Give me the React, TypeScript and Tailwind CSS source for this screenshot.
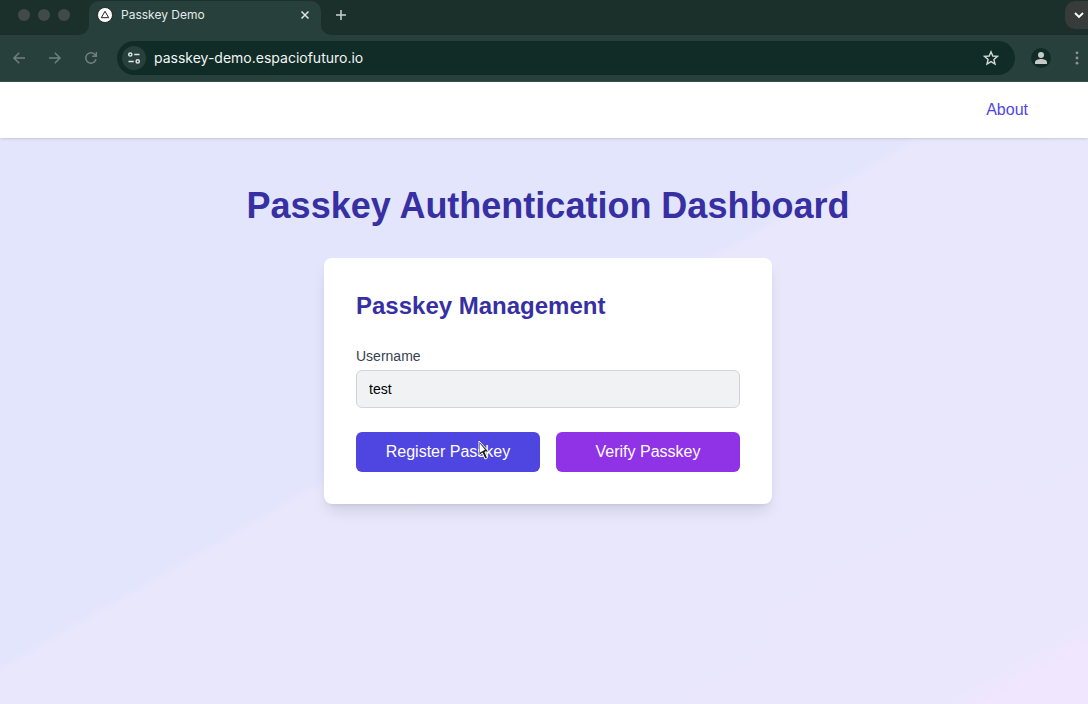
import { useState } from "react";

function TabStrip() {
  return (
    <div className="flex h-[35px] items-start justify-between bg-[#1c302b]">
      <div className="flex h-full items-end">
        <div className="flex h-full w-[89px] items-center gap-2 pb-[5px] pl-[18px]">
          <span className="size-3 rounded-full bg-[#404a47]" />
          <span className="size-3 rounded-full bg-[#404a47]" />
          <span className="size-3 rounded-full bg-[#404a47]" />
        </div>
        <div className="relative flex h-[34px] w-[232px] items-center rounded-t-[10px] bg-[#27403c] pr-2 pb-1.5 pl-2">
          <svg className="absolute bottom-0 -left-2.5 size-2.5" viewBox="0 0 10 10" aria-hidden="true">
            <path d="M10 0v10H0A10 10 0 0 0 10 0Z" fill="#27403c" />
          </svg>
          <svg className="absolute -right-2.5 bottom-0 size-2.5" viewBox="0 0 10 10" aria-hidden="true">
            <path d="M0 0v10h10A10 10 0 0 1 0 0Z" fill="#27403c" />
          </svg>
          <svg className="size-4" viewBox="0 0 16 16" aria-hidden="true">
            <circle cx="8" cy="8" r="7.5" fill="#fff" stroke="#111" strokeWidth="0.8" />
            <path d="M8 4.300 11.700 10.700H4.300Z" fill="none" stroke="#222" strokeWidth="1" />
          </svg>
          <span className="ml-2 flex-1 text-xs text-[#e3eae8]">Passkey Demo</span>
          <button type="button" aria-label="Close tab" className="flex size-4 items-center justify-center text-[#dce5e2]">
            <svg className="size-4" viewBox="0 0 16 16" fill="none" stroke="currentColor" strokeWidth="1.5" aria-hidden="true">
              <path d="m4.500 4.500 7 7m0-7-7 7" />
            </svg>
          </button>
        </div>
        <button type="button" aria-label="New tab" className="mb-3 ml-3 flex size-4 items-center justify-center text-[#c8d2cf]">
          <svg className="size-4" viewBox="0 0 16 16" fill="none" stroke="currentColor" strokeWidth="1.5" aria-hidden="true">
            <path d="M8 3v10M3 8h10" />
          </svg>
        </button>
      </div>
      <button type="button" aria-label="Search tabs" className="mt-px flex h-7 w-[23px] items-center justify-end rounded-l-[10px] bg-[#373b3a] pr-px text-white">
        <svg className="size-4" viewBox="0 0 16 16" fill="none" stroke="currentColor" strokeWidth="1.8" aria-hidden="true">
          <path d="m4 6 4 4 4-4" />
        </svg>
      </button>
    </div>
  );
}

function Toolbar() {
  return (
    <div className="flex h-[47px] items-center border-b border-[#3b504c] bg-[#27403c] pl-[11px]">
      <div className="flex w-[106px] gap-5 text-[#70817d]">
        <button type="button" aria-label="Back" className="size-4">
          <svg className="size-4" viewBox="0 0 16 16" fill="none" stroke="currentColor" strokeWidth="1.5" aria-hidden="true">
            <path d="M14 8H3.200M8.200 2.800 3 8l5.200 5.200" />
          </svg>
        </button>
        <button type="button" aria-label="Forward" className="size-4">
          <svg className="size-4" viewBox="0 0 16 16" fill="none" stroke="currentColor" strokeWidth="1.5" aria-hidden="true">
            <path d="M2 8h10.800M7.800 2.800 13 8l-5.200 5.200" />
          </svg>
        </button>
        <button type="button" aria-label="Reload" className="size-4">
          <svg className="size-4" viewBox="0 0 16 16" fill="none" stroke="currentColor" strokeWidth="1.5" aria-hidden="true">
            <path d="M13 9.300A5.200 5.200 0 1 1 11.800 4.400L13 5.800M13.300 2v4.200H9.200" />
          </svg>
        </button>
      </div>
      <div className="flex h-[34px] flex-1 items-center rounded-full bg-[#112b27] pr-4 pl-[5px]">
        <button type="button" aria-label="View site information" className="flex size-6 items-center justify-center rounded-full bg-[#27403c] text-[#dce5e2]">
          <svg className="size-4" viewBox="0 0 16 16" fill="none" stroke="currentColor" strokeWidth="1.5" aria-hidden="true">
            <circle cx="4.300" cy="4.500" r="1.600" />
            <path d="M8.200 4.500h5.300M2.500 11.400h5.300" />
            <circle cx="11.700" cy="11.400" r="1.600" />
          </svg>
        </button>
        <input
          type="text"
          aria-label="Address"
          defaultValue="passkey-demo.espaciofuturo.io"
          className="ml-2 min-w-0 flex-1 bg-transparent text-sm font-normal text-[#f0f6f4] outline-none"
        />
        <button type="button" aria-label="Bookmark this page" className="size-4 text-[#d0dad6]">
          <svg className="size-4" viewBox="0 0 16 16" fill="none" stroke="currentColor" strokeWidth="1.400" aria-hidden="true">
            <path d="m8 1.800 1.800 4.200 4.700.4-3.600 3.100 1.100 4.600-4-2.500-4 2.500 1.100-4.600-3.600-3.100 4.700-.4Z" />
          </svg>
        </button>
      </div>
      <button type="button" aria-label="Profile" className="ml-4 flex size-5 items-center justify-center rounded-full bg-[#112b27] text-[#c6c9c8]">
        <svg className="size-4" viewBox="0 0 16 16" fill="currentColor" aria-hidden="true">
          <circle cx="8" cy="5" r="3" />
          <path d="M2 14v-1.800C2 10 5.500 9 8 9s6 1 6 3.200V14Z" />
        </svg>
      </button>
      <button type="button" aria-label="Browser menu" className="mr-[3px] ml-[18px] size-4 text-[#8b9794]">
        <svg className="size-4" viewBox="0 0 16 16" fill="currentColor" aria-hidden="true">
          <circle cx="8" cy="2.800" r="1.400" />
          <circle cx="8" cy="8" r="1.400" />
          <circle cx="8" cy="13.200" r="1.400" />
        </svg>
      </button>
    </div>
  );
}

function PasskeyCard() {
  const [username, setUsername] = useState("test");
  return (
    <section className="w-full max-w-md rounded-lg bg-white p-8 shadow-lg">
      <h2 className="mb-6 text-2xl font-bold text-[#3730a3]">Passkey Management</h2>
      <label htmlFor="username" className="mb-1 block text-sm text-[#374151]">
        Username
      </label>
      <input
        id="username"
        type="text"
        value={username}
        onChange={(event) => setUsername(event.target.value)}
        className="block h-[38px] w-full rounded-md border border-[#d1d5db] bg-[#f1f2f4] px-3 text-sm text-black outline-none"
      />
      <div className="mt-6 grid grid-cols-2 gap-4">
        <button type="button" className="relative h-10 rounded-md bg-[#4f46e2] text-base text-white">
          Register Passkey
          <svg className="absolute top-2 left-[122px] h-5 w-3" viewBox="0 0 12 20" aria-hidden="true">
            <path d="M1 1v15l3.300-3 2.700 6 2.500-1.200L7 12h4.200Z" fill="#222" stroke="#fff" strokeWidth="1" />
            <path d="M2 3.500v9l5-2.700Z" fill="#fff" />
          </svg>
        </button>
        <button type="button" className="h-10 rounded-md bg-[#9032e6] text-base text-white">
          Verify Passkey
        </button>
      </div>
    </section>
  );
}

export default function App() {
  return (
    <div className="flex min-h-screen flex-col font-['Liberation_Sans',Arial,sans-serif]">
      <header className="font-[Inter,sans-serif]">
        <TabStrip />
        <Toolbar />
      </header>
      <nav className="z-10 flex h-14 items-center justify-end bg-white px-15 shadow-sm">
        <a href="#about" className="text-base text-[#4f46e5]">
          About
        </a>
      </nav>
      <main className="flex flex-1 flex-col items-center bg-[linear-gradient(150deg,#e3e5fd_44%,#e9e7fc_45%,#eae7fd_93%,#f0e6fe_95%)] pt-12 pb-8 pl-2">
        <h1 className="mb-8 text-4xl font-bold text-[#3730a3]">Passkey Authentication Dashboard</h1>
        <PasskeyCard />
      </main>
    </div>
  );
}
